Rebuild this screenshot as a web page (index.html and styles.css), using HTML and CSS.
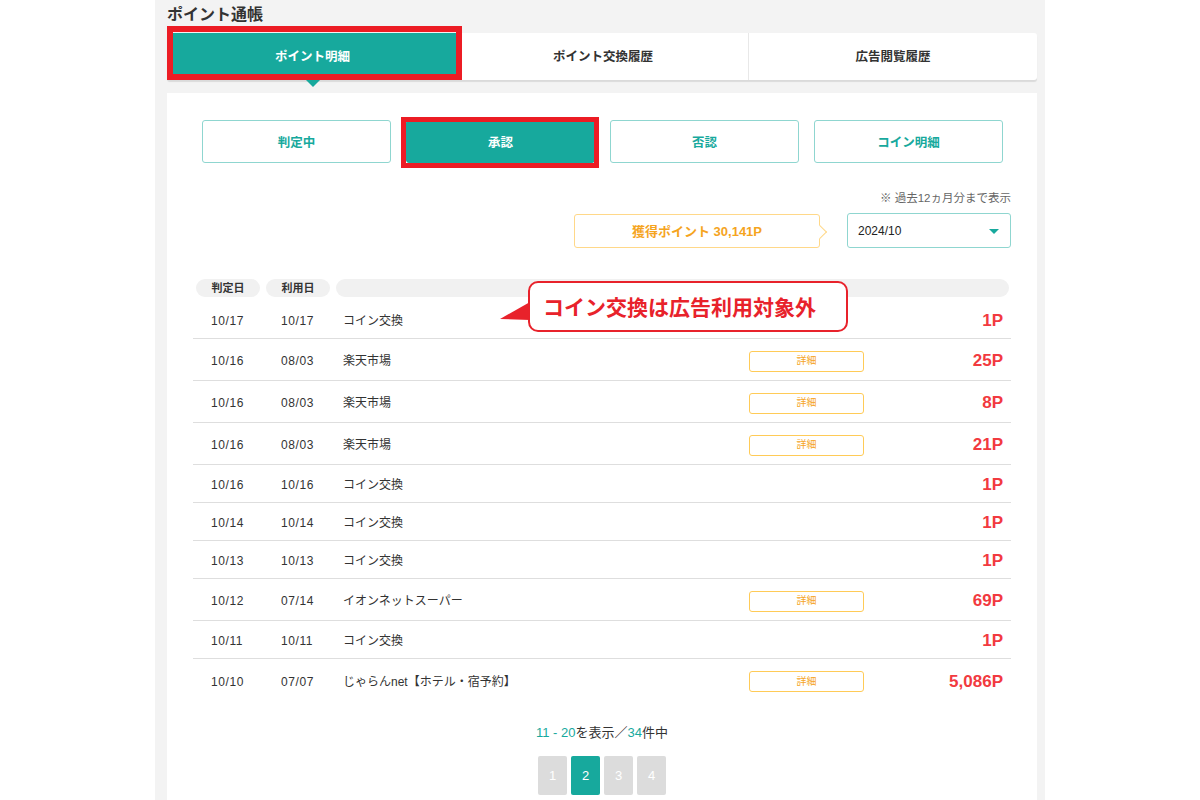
FILE: index.html
```html
<!DOCTYPE html>
<html lang="ja">
<head>
<meta charset="utf-8">
<title>ポイント通帳</title>
<link rel="stylesheet" href="styles.css">
</head>
<body>
<div class="page">
  <h1 class="title">ポイント通帳</h1>
  <div class="tabs">
    <div class="tab active">ポイント明細<span class="mark mark-tab"></span></div>
    <div class="tab">ポイント交換履歴</div>
    <div class="tab">広告閲覧履歴</div>
  </div>
  <div class="card">
    <div class="subtabs">
      <div class="subtab">判定中</div>
      <div class="subtab active">承認<span class="mark mark-sub"></span></div>
      <div class="subtab">否認</div>
      <div class="subtab">コイン明細</div>
    </div>
    <p class="note">※ 過去12ヵ月分まで表示</p>
    <div class="summary">
      <div class="earned">獲得ポイント 30,141P</div>
      <div class="select">2024/10<span class="caret"></span></div>
    </div>
    <div class="table">
      <div class="thead">
        <span class="pill p1">判定日</span>
        <span class="pill p2">利用日</span>
        <span class="pill p3"></span>
      </div>
      <div class="row first"><span class="c1">10/17</span><span class="c2">10/17</span><span class="c3">コイン交換</span><span class="c4"></span><span class="pt">1P</span></div>
      <div class="row btnrow"><span class="c1">10/16</span><span class="c2">08/03</span><span class="c3">楽天市場</span><span class="c4"><span class="detail">詳細</span></span><span class="pt">25P</span></div>
      <div class="row btnrow"><span class="c1">10/16</span><span class="c2">08/03</span><span class="c3">楽天市場</span><span class="c4"><span class="detail">詳細</span></span><span class="pt">8P</span></div>
      <div class="row btnrow"><span class="c1">10/16</span><span class="c2">08/03</span><span class="c3">楽天市場</span><span class="c4"><span class="detail">詳細</span></span><span class="pt">21P</span></div>
      <div class="row"><span class="c1">10/16</span><span class="c2">10/16</span><span class="c3">コイン交換</span><span class="c4"></span><span class="pt">1P</span></div>
      <div class="row"><span class="c1">10/14</span><span class="c2">10/14</span><span class="c3">コイン交換</span><span class="c4"></span><span class="pt">1P</span></div>
      <div class="row"><span class="c1">10/13</span><span class="c2">10/13</span><span class="c3">コイン交換</span><span class="c4"></span><span class="pt">1P</span></div>
      <div class="row btnrow"><span class="c1">10/12</span><span class="c2">07/14</span><span class="c3">イオンネットスーパー</span><span class="c4"><span class="detail">詳細</span></span><span class="pt">69P</span></div>
      <div class="row"><span class="c1">10/11</span><span class="c2">10/11</span><span class="c3">コイン交換</span><span class="c4"></span><span class="pt">1P</span></div>
      <div class="row btnrow last"><span class="c1">10/10</span><span class="c2">07/07</span><span class="c3">じゃらんnet【ホテル・宿予約】</span><span class="c4"><span class="detail">詳細</span></span><span class="pt">5,086P</span></div>

      <div class="callout">
        <svg class="tail" width="30" height="20" viewBox="0 0 30 20"><polygon points="0,17 30,0 30,18" fill="#e8222b"/></svg>
        コイン交換は広告利用対象外
      </div>
    </div>
    <p class="count"><span class="hl">11 - 20</span>を表示／<span class="hl">34</span>件中</p>
    <div class="pager">
      <span class="pg">1</span>
      <span class="pg on">2</span>
      <span class="pg">3</span>
      <span class="pg">4</span>
    </div>
  </div>
</div>
</body>
</html>
```
FILE: styles.css
```css
* { box-sizing: border-box; }
html, body { margin: 0; padding: 0; background: #ffffff; }
body {
  font-family: "Liberation Sans", "Noto Sans CJK JP", sans-serif;
  color: #333333;
  height: 800px;
  overflow: hidden;
}
.page {
  width: 890px;
  margin-left: 155px;
  background: #f3f3f3;
  min-height: 800px;
  padding: 0 8px 0 12px;
}
.title {
  margin: 0;
  height: 33px;
  line-height: 30px;
  font-size: 16px;
  font-weight: bold;
  color: #333;
}
.tabs {
  display: grid;
  grid-template-columns: 291px 290px 1fr;
  height: 47px;
  background: #fff;
  border-radius: 3px;
  box-shadow: 0 2px 1px rgba(0,0,0,0.10);
}
.tab {
  position: relative;
  display: flex;
  align-items: center;
  justify-content: center;
  padding-bottom: 2px;
  font-size: 12.5px;
  font-weight: bold;
  color: #333;
}
.tab + .tab + .tab { border-left: 1px solid #e8e8e8; }
.tab.active {
  background: #17a99d;
  color: #fff;
  border-radius: 3px 0 0 3px;
}
.tab.active::after {
  content: "";
  position: absolute;
  left: 50%;
  bottom: -7px;
  margin-left: -7px;
  border-left: 7px solid transparent;
  border-right: 7px solid transparent;
  border-top: 7px solid #17a99d;
}
.mark {
  position: absolute;
  border: 6px solid #ec1c24;
  pointer-events: none;
}
.mark-tab { left: 0; top: -7px; width: 295px; height: 54px; }
.mark-sub { left: -6px; top: -4px; right: -5px; bottom: -6px; border-width: 5px; }

.card {
  margin-top: 13px;
  background: #fff;
  padding: 27px 26px 0;
  min-height: 720px;
}
.subtabs {
  margin: 0 8px 0 9px;
  display: grid;
  grid-template-columns: repeat(4, 1fr);
  column-gap: 15px;
}
.subtab {
  position: relative;
  height: 43px;
  border: 1px solid #8fd6d0;
  border-radius: 3px;
  display: flex;
  align-items: center;
  justify-content: center;
  font-size: 12.5px;
  font-weight: bold;
  color: #17a99d;
}
.subtab.active {
  background: #17a99d;
  border-color: #17a99d;
  color: #fff;
}
.note {
  margin: 28px 0 0;
  text-align: right;
  font-size: 11.5px;
  line-height: 14px;
  color: #666;
}
.summary {
  margin-top: 8px;
  display: flex;
  justify-content: flex-end;
  align-items: center;
  gap: 27px;
}
.earned {
  position: relative;
  width: 246px;
  height: 34px;
  border: 1px solid #ffd889;
  border-radius: 3px;
  display: flex;
  align-items: center;
  justify-content: center;
  font-size: 13px;
  font-weight: bold;
  color: #f5a41e;
}
.earned::after {
  content: "";
  position: absolute;
  right: -6px;
  top: 12px;
  width: 9px;
  height: 9px;
  background: #fff;
  border-top: 1px solid #ffd889;
  border-right: 1px solid #ffd889;
  transform: rotate(45deg);
}
.select {
  position: relative;
  width: 164px;
  height: 35px;
  border: 1px solid #8fd6d0;
  border-radius: 3px;
  display: flex;
  align-items: center;
  padding-left: 10px;
  font-size: 12px;
  color: #222;
}
.caret {
  position: absolute;
  right: 11px;
  top: 15px;
  border-left: 5px solid transparent;
  border-right: 5px solid transparent;
  border-top: 5px solid #17a99d;
}
.table {
  position: relative;
  margin-top: 31px;
}
.thead {
  display: flex;
  gap: 6px;
  padding-left: 3px;
  padding-right: 2px;
}
.pill {
  height: 18px;
  line-height: 18px;
  border-radius: 9px;
  background: #f1f1f1;
  font-size: 11px;
  font-weight: bold;
  color: #333;
  text-align: center;
}
.p1, .p2 { width: 64px; }
.p3 { flex: 1; }
.row {
  display: grid;
  grid-template-columns: 88px 62px 1fr 115px 147px;
  align-items: center;
  padding: 11px 0 8px;
  min-height: 37.6px;
  border-bottom: 1px solid #dedede;
  font-size: 12px;
  line-height: 18px;
  color: #333;
}
.row.first { padding-top: 14px; padding-bottom: 7px; min-height: 42px; }
.row.btnrow { min-height: 42px; }
.row.last { border-bottom: 0; }
.c1 { padding-left: 18px; }
.c1, .c2 { letter-spacing: 0.6px; }
.detail {
  display: flex;
  align-items: center;
  justify-content: center;
  height: 21px;
  border: 1px solid #ffcb57;
  border-radius: 3px;
  font-size: 10px;
  color: #f5a41e;
}
.pt {
  text-align: right;
  padding-right: 8px;
  font-size: 17px;
  font-weight: bold;
  color: #f23a3f;
}
.callout {
  position: absolute;
  left: 335px;
  top: 2px;
  width: 320px;
  height: 51px;
  border: 2px solid #e8222b;
  border-radius: 10px;
  background: #fff;
  padding-left: 13px;
  padding-bottom: 2px;
  display: flex;
  align-items: center;
  font-size: 21px;
  font-weight: bold;
  color: #e8222b;
}
.tail {
  position: absolute;
  left: -30px;
  top: 19px;
}
.count {
  margin: 23px 0 0;
  text-align: center;
  font-size: 13px;
  line-height: 18px;
  color: #333;
}
.hl { color: #17a99d; }
.pager {
  margin-top: 14px;
  display: flex;
  justify-content: center;
  gap: 4px;
}
.pg {
  width: 29px;
  height: 39px;
  border-radius: 2px;
  background: #dcdcdc;
  color: #fff;
  font-size: 13px;
  display: flex;
  align-items: center;
  justify-content: center;
}
.pg.on { background: #17a99d; }
```
